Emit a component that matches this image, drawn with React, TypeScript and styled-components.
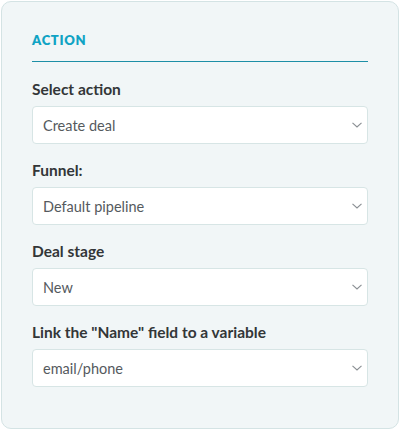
import React from "react";
import styled, { createGlobalStyle } from "styled-components";

const GlobalStyle = createGlobalStyle`
  html, body {
    margin: 0;
    padding: 0;
    background: #ffffff;
  }
  body {
    font-family: Lato, "Noto Sans", "Liberation Sans", sans-serif;
  }
  * {
    box-sizing: border-box;
  }
`;

const Panel = styled.div`
  margin: 1px;
  width: 398px;
  height: 428px;
  background-color: #f1f6f7;
  border: 1px solid #d4e3e4;
  border-radius: 10px;
  padding: 28px 30px 0 30px;
`;

const SectionTitle = styled.h2`
  margin: 0;
  font-size: 13px;
  font-weight: 800;
  letter-spacing: 0.7px;
  color: #10a3c4;
  line-height: 20px;
  padding-bottom: 11px;
  border-bottom: 1px solid #1d8fa6;
`;

const Fields = styled.div`
  display: flex;
  flex-direction: column;
  gap: 16px;
  padding-top: 17px;
`;

const Field = styled.div`
  display: flex;
  flex-direction: column;
  gap: 7px;
`;

const Label = styled.label`
  font-size: 15.5px;
  font-weight: 700;
  color: #333638;
  line-height: 20px;
`;

const SelectBox = styled.div`
  display: flex;
  align-items: center;
  justify-content: space-between;
  height: 38px;
  padding: 0 5px 0 10px;
  background: #ffffff;
  border: 1px solid #d7e5e5;
  border-radius: 4px;
  font-size: 14.5px;
  color: #555a5e;
`;

const ChevronIcon = styled.svg`
  display: block;
  flex-shrink: 0;
`;

const Chevron = () => (
  <ChevronIcon width="10" height="6" viewBox="0 0 10 6" fill="none">
    <path d="M0.5 0.8L5 5L9.5 0.8" stroke="#8a8f93" strokeWidth="1.1" />
  </ChevronIcon>
);

const fields = [
  { label: "Select action", value: "Create deal" },
  { label: "Funnel:", value: "Default pipeline" },
  { label: "Deal stage", value: "New" },
  { label: 'Link the "Name" field to a variable', value: "email/phone" },
];

function App() {
  return (
    <>
      <GlobalStyle />
      <Panel>
        <SectionTitle>ACTION</SectionTitle>
        <Fields>
          {fields.map((f) => (
            <Field key={f.label}>
              <Label>{f.label}</Label>
              <SelectBox>
                <span>{f.value}</span>
                <Chevron />
              </SelectBox>
            </Field>
          ))}
        </Fields>
      </Panel>
    </>
  );
}

export default App;
